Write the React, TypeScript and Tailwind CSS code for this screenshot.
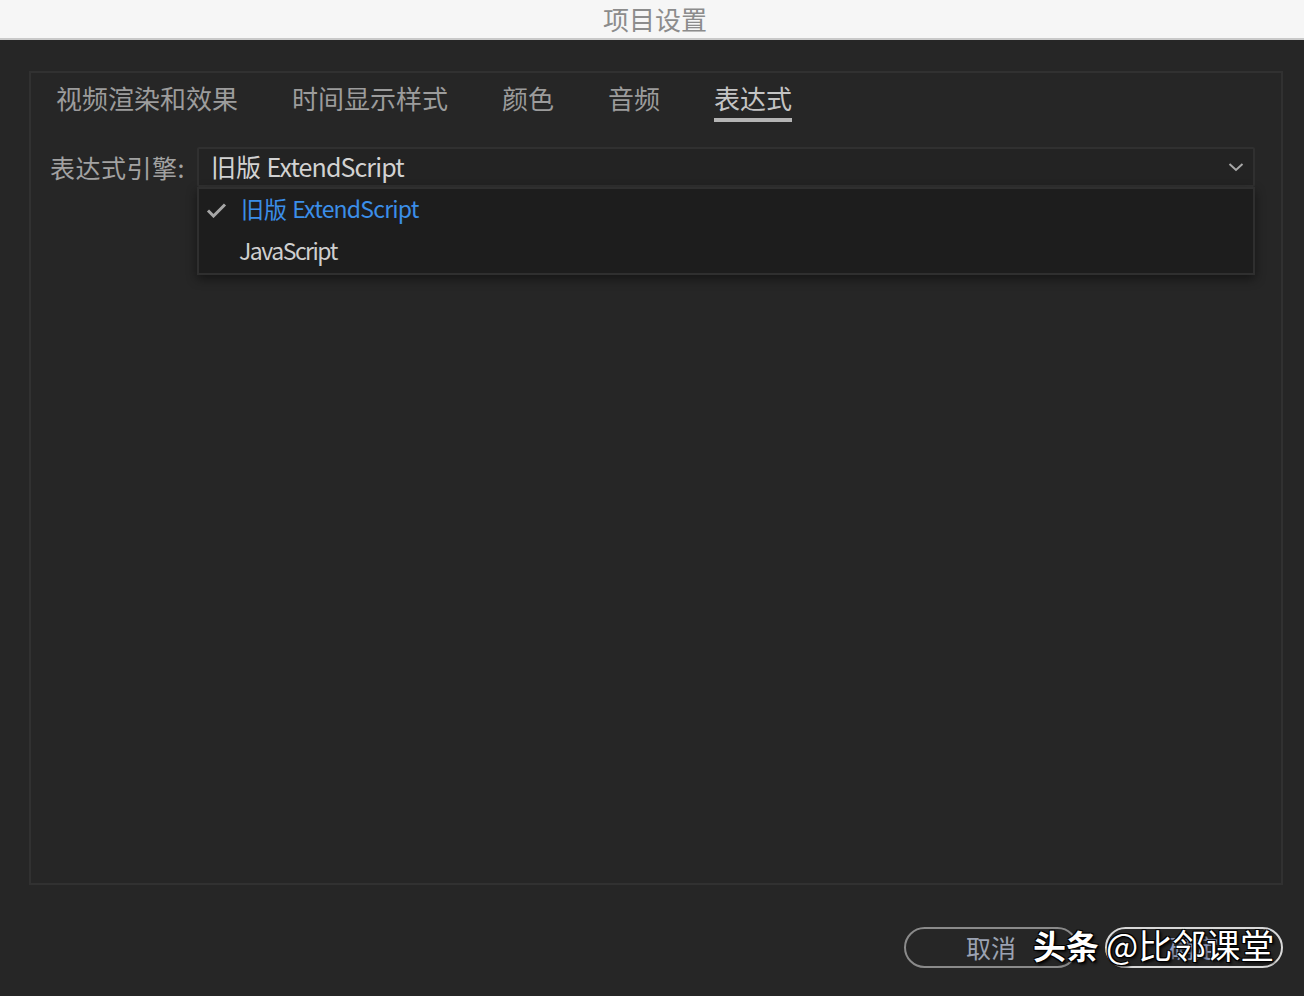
import { useState } from "react";

const tabs = ["视频渲染和效果", "时间显示样式", "颜色", "音频", "表达式"];

function Chevron() {
  return (
    <svg className="w-[16px] h-[10px]" viewBox="0 0 16 10" fill="none">
      <path d="M1.5 2l6.5 6 6.5-6" stroke="#a8a8a8" strokeWidth="2" />
    </svg>
  );
}

function Check() {
  return (
    <svg className="w-[21px] h-[16px]" viewBox="0 0 21 16" fill="none">
      <path d="M2 8.5l5.5 5.5L19 2.5" stroke="#a6a6a6" strokeWidth="3" />
    </svg>
  );
}

export default function App() {
  const [active] = useState(4);

  return (
    <div className="w-[1304px] h-[996px] flex flex-col bg-[#262626] overflow-hidden font-['Noto_Sans_CJK_SC','Noto_Sans',sans-serif]">
      {/* window title */}
      <div className="h-[40px] shrink-0 bg-[#f6f6f6] border-b-2 border-[#c9c9c9] flex items-center justify-center">
        <span className="text-[26px] leading-none text-[#8c8c8c] ml-[6px]">项目设置</span>
      </div>

      {/* settings panel */}
      <div className="mt-[31px] ml-[29px] mr-[21px] h-[814px] shrink-0 border-2 border-[#313131] flex flex-col">
        <div className="flex gap-[54px] pl-[25px] pt-[12px]">
          {tabs.map((t, i) => (
            <div key={t} className="flex flex-col">
              <span
                className={
                  "text-[26px] leading-[26px] h-[26px] " +
                  (i === active ? "text-[#c4c4c4]" : "text-[#9c9c9c]")
                }
              >
                {t}
              </span>
              <div
                className={
                  "mt-[7px] h-[4px] " + (i === active ? "bg-[#b4b4b4]" : "bg-transparent")
                }
              />
            </div>
          ))}
        </div>

        <div className="flex items-center mt-[25px] pl-[19px] pr-[26px]">
          <span className="w-[147px] shrink-0 text-[25px] leading-none text-[#a2a2a2] tracking-[0.5px]">表达式引擎:</span>
          <div className="relative flex-1">
            <div className="h-[40px] bg-[#232323] border-2 border-[#303030] rounded-[2px] flex items-center justify-between pl-[12px] pr-[9px]">
              <span className="text-[25px] leading-none text-[#d2d2d2] -mt-[2px]">
                旧版 <span className="tracking-[-0.9px]">ExtendScript</span>
              </span>
              <Chevron />
            </div>
            <div className="absolute left-0 right-0 top-[40px] bg-[#1d1d1d] border-2 border-[#2f2f2f] shadow-[0_4px_10px_rgba(0,0,0,0.45)] flex flex-col">
              <div className="h-[42px] flex items-center pl-[7px]">
                <Check />
                <span className="ml-[14px] text-[23px] leading-none text-[#3b8ee8] -mt-[4px]">
                  旧版 <span className="tracking-[-0.8px]">ExtendScript</span>
                </span>
              </div>
              <div className="h-[42px] flex items-center pl-[40px]">
                <span className="text-[23px] leading-none text-[#cfcfcf] -mt-[4px] tracking-[-1.5px]">JavaScript</span>
              </div>
            </div>
          </div>
        </div>
      </div>

      {/* footer buttons */}
      <div className="relative flex justify-end gap-[27px] mt-[42px] mr-[21px]">
        <button className="w-[174px] h-[41px] rounded-full border-2 border-[#8a8a8a] flex items-center justify-center text-[25px] leading-none text-[#9ba2b2]">
          取消
        </button>
        <button className="w-[178px] h-[41px] rounded-full border-2 border-[#d8d8d8] flex items-center justify-center text-[25px] leading-none text-[#8e9cc0]">
          确定
        </button>
        {/* watermark overlay */}
        <div className="absolute left-[1033px] top-[1px] flex items-center text-white [text-shadow:1px_1px_0_#000,-1px_-1px_0_#000,1px_-1px_0_#000,-1px_1px_0_#000,2px_2px_3px_#000]">
          <span className="text-[33px] leading-none font-bold">头条</span>
          <span className="ml-[7px] text-[34px] leading-none">@比邻课堂</span>
        </div>
      </div>
    </div>
  );
}
